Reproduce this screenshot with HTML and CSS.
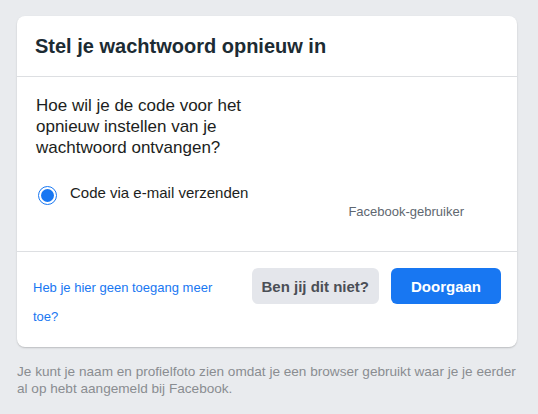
FILE: index.html
```html
<!DOCTYPE html>
<html lang="nl">
<head>
<meta charset="utf-8">
<title>Stel je wachtwoord opnieuw in</title>
<link rel="stylesheet" href="styles.css">
</head>
<body>
<div class="page">
  <div class="card">
    <div class="card-header">
      <h2 class="title">Stel je wachtwoord opnieuw in</h2>
    </div>
    <div class="card-body">
      <div class="left">
        <div class="question">Hoe wil je de code voor het opnieuw instellen van je wachtwoord ontvangen?</div>
        <label class="option">
          <span class="radio"><span class="dot"></span></span>
          <span class="option-label">Code via e-mail verzenden</span>
        </label>
      </div>
      <div class="right">
        <div class="user-name">Facebook-gebruiker</div>
      </div>
    </div>
    <div class="card-footer">
      <a class="link" href="#">Heb je hier geen toegang meer toe?</a>
      <div class="buttons">
        <button class="btn btn-gray">Ben jij dit niet?</button>
        <button class="btn btn-blue">Doorgaan</button>
      </div>
    </div>
  </div>
  <p class="note">Je kunt je naam en profielfoto zien omdat je een browser gebruikt waar je je eerder al op hebt aangemeld bij Facebook.</p>
</div>
</body>
</html>
```
FILE: styles.css
```css
* { box-sizing: border-box; }
html, body {
  margin: 0;
  padding: 0;
  background: #e9ebee;
  font-family: "Liberation Sans", Arial, Helvetica, sans-serif;
}
.page {
  width: 501px;
  margin: 16px 0 0 17px;
}
.card {
  width: 500px;
  background: #fff;
  border-radius: 8px;
  box-shadow: 0 1px 2px rgba(0, 0, 0, 0.15), 0 1px 1px rgba(0, 0, 0, 0.05);
}
.card-header {
  padding: 17px 18px 17px 18px;
  border-bottom: 1px solid #dddfe2;
}
.title {
  margin: 0;
  font-size: 20px;
  line-height: 26px;
  font-weight: bold;
  color: #1c2b33;
}
.card-body {
  display: flex;
  justify-content: space-between;
  align-items: stretch;
  padding: 18px 53px 31px 19px;
  border-bottom: 1px solid #dddfe2;
}
.left {
  width: 230px;
  padding-bottom: 15px;
}
.question {
  font-size: 17px;
  line-height: 21px;
  color: #1c1e21;
}
.option {
  display: flex;
  align-items: center;
  margin-top: 27px;
}
.radio {
  width: 19px;
  height: 19px;
  border-radius: 50%;
  border: 1.5px solid #1877f2;
  display: flex;
  align-items: center;
  justify-content: center;
  margin-left: 2px;
  flex-shrink: 0;
}
.dot {
  width: 13px;
  height: 13px;
  border-radius: 50%;
  background: #1877f2;
}
.option-label {
  margin-left: 13px;
  font-size: 15px;
  line-height: 20px;
  color: #1c1e21;
  position: relative;
  top: -2px;
}
.right {
  display: flex;
  flex-direction: column;
  justify-content: flex-end;
}
.user-name {
  font-size: 13px;
  line-height: 16px;
  color: #606770;
}
.card-footer {
  display: flex;
  justify-content: space-between;
  align-items: flex-start;
  padding: 16px 16px 16px 16px;
}
.link {
  width: 200px;
  margin-top: 5px;
  font-size: 13px;
  line-height: 29px;
  color: #1877f2;
  text-decoration: none;
}
.buttons {
  display: flex;
  gap: 12px;
}
.btn {
  height: 36px;
  border: none;
  border-radius: 6px;
  font-family: "Liberation Sans", Arial, Helvetica, sans-serif;
  font-size: 15px;
  font-weight: bold;
  white-space: nowrap;
  padding: 0 10px;
}
.btn-gray {
  background: #e4e6eb;
  color: #4b4f56;
}
.btn-blue {
  background: #1877f2;
  color: #fff;
  width: 110px;
}
.note {
  margin: 16px 0 0 0;
  font-size: 13.6px;
  line-height: 17px;
  color: #8a8d91;
}
```
